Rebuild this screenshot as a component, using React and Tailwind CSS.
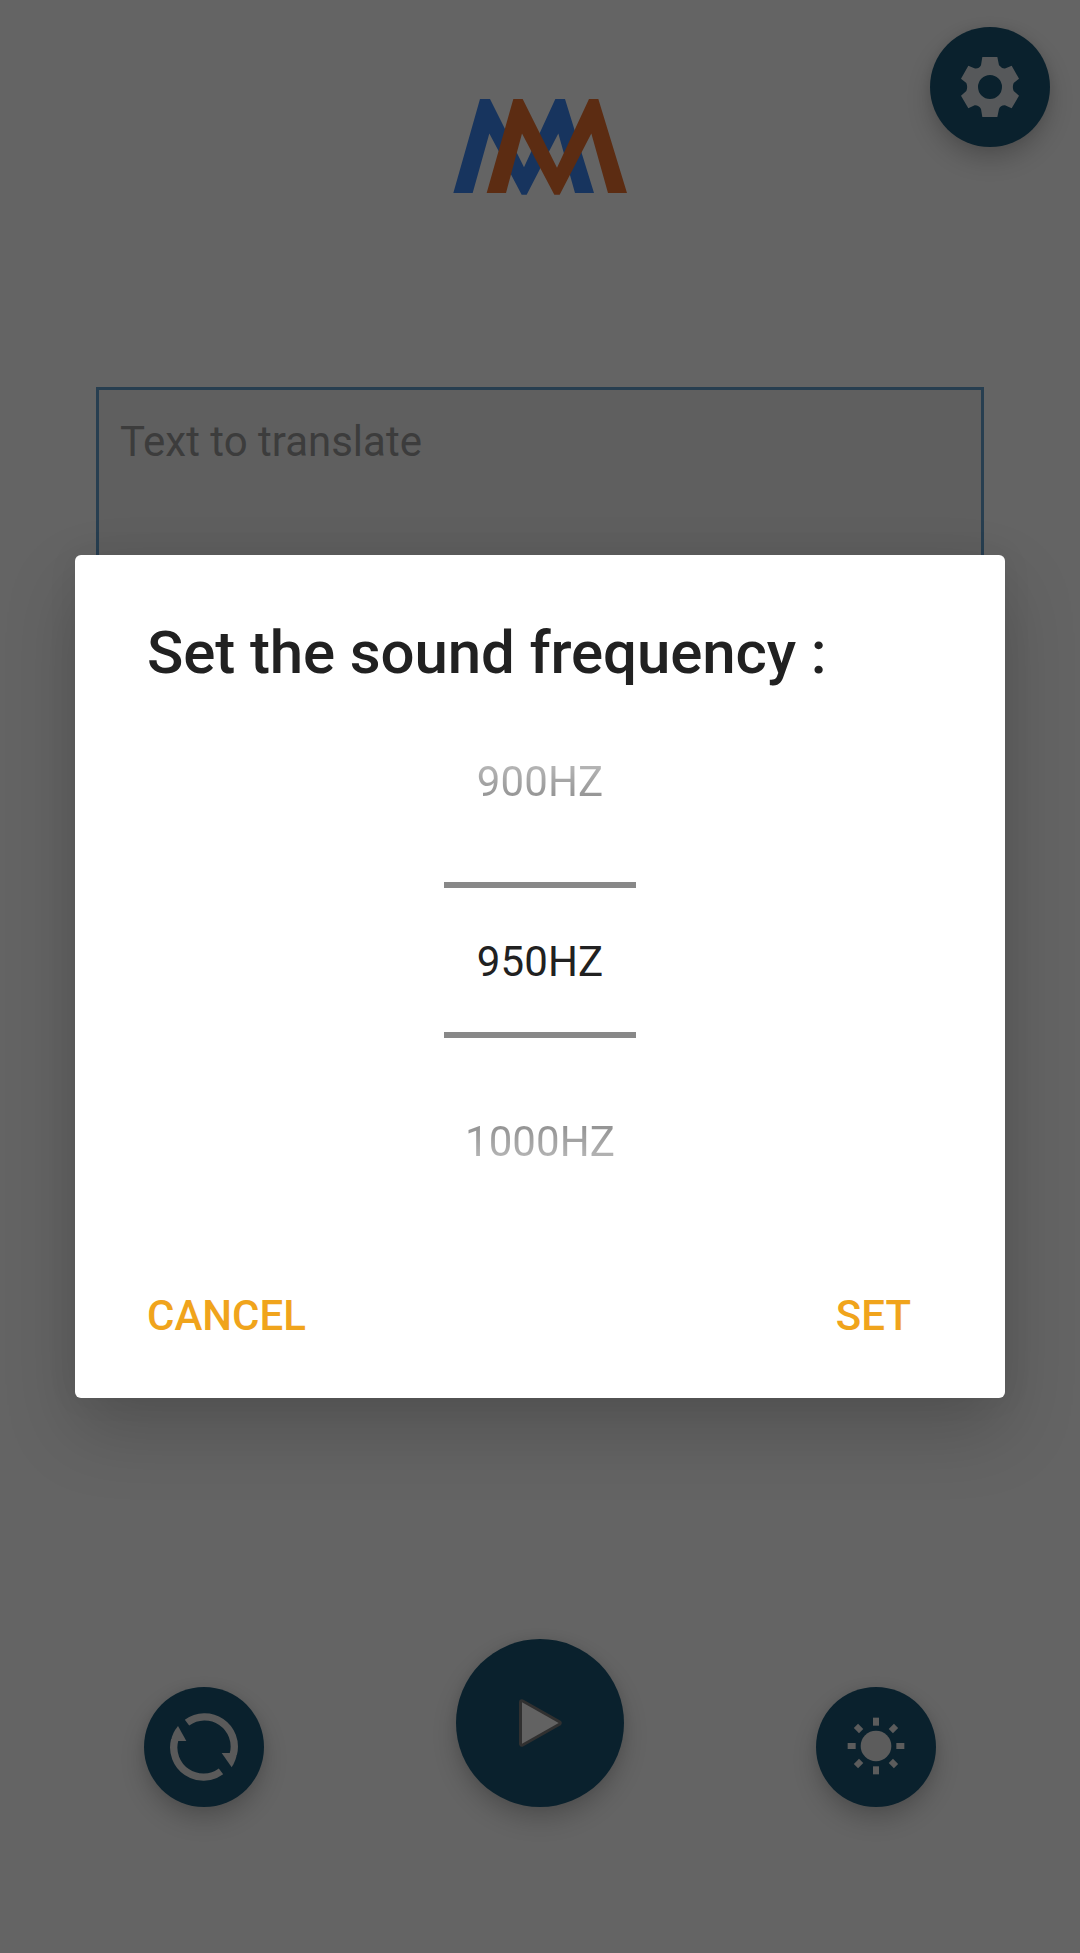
import clsx from "clsx";

const rayAngles = [0, 45, 90, 135, 180, 225, 270, 315];

function Logo() {
  return (
    <svg className="mt-[72px] h-24 w-[174px]" viewBox="69 56 522 290" preserveAspectRatio="none">
      <path
        fill="#3a82ea"
        d="M70 340L150 56H180L282 262L376 56H405L492 340H435L385 160L290 345H275L178 160L128 340Z"
      />
      <path
        fill="#e66e2d"
        d="M170 340L250 56H278L381 264L477 56H505L591 340H534L484 160L389 345H373L276 160L228 340Z"
      />
    </svg>
  );
}

function GearIcon() {
  return (
    <svg className="h-[60px] w-[60px]" viewBox="150 141 180 180" fill="#d7dde0" fillRule="evenodd">
      <path d="M217 141H262L267 166Q277 178 287 175L305 167L327 206L311 219Q306 231 311 243L327 257L305 295L285 286Q272 285 267 297L262 321H217L213 297Q206 285 194 286L175 295L153 257L169 243Q174 231 169 219L153 206L175 167L193 175Q206 178 213 166ZM240 195A36 36 0 1 0 240 267A36 36 0 1 0 240 195Z" />
    </svg>
  );
}

function SyncIcon() {
  return (
    <svg className="h-[68px] w-[68px]" viewBox="120 129 204 204">
      <g fill="none" stroke="#e0e0e0" strokeWidth="22">
        <path d="M171 158A89 89 0 0 1 310 252" />
        <path d="M273 304A89 89 0 0 1 134 210" />
      </g>
      <g fill="#e0e0e0">
        <path d="M275 249H321Q318 272 305 292Z" />
        <path d="M169 213H123Q126 190 144 168Z" />
      </g>
    </svg>
  );
}

function PlayIcon() {
  return (
    <svg className="h-[56px] w-[56px]" viewBox="246 256 168 168">
      <path
        d="M276 278L386 340L276 402Z"
        fill="none"
        stroke="#787878"
        strokeWidth="18"
        strokeLinejoin="round"
      />
      <path d="M276 278L386 340L276 402Z" fill="#f5f5f5" />
    </svg>
  );
}

function SunIcon() {
  return (
    <svg className="h-[60px] w-[60px] -translate-y-px" viewBox="138 137 180 180" fill="#e6e6e6">
      <circle cx="228" cy="227" r="46" />
      {rayAngles.map((angle) => (
        <rect
          key={angle}
          x="219"
          y="142"
          width="18"
          height={angle % 90 ? 22 : 24}
          transform={`rotate(${angle} 228 227)`}
        />
      ))}
    </svg>
  );
}

function RoundButton({ label, large, children }) {
  return (
    <button
      aria-label={label}
      className={clsx(
        "flex items-center justify-center rounded-full bg-[#195371] shadow-[0_12px_24px_rgba(0,0,0,0.2),0_0_12px_rgba(0,0,0,0.08)]",
        large ? "size-[168px]" : "size-[120px]"
      )}
    >
      {children}
    </button>
  );
}

function FrequencyPicker() {
  return (
    <div className="mx-auto mt-[5px] flex w-48 flex-col text-center text-[42px] leading-[48px] tracking-[0.1px]">
      <div className="flex h-[190px] items-center justify-center pb-[10px]">
        <span className="bg-linear-to-b from-[#bdbdbd] to-[#8c8c8c] bg-clip-text text-transparent">900HZ</span>
      </div>
      <div className="h-[6px] bg-[#888888]" />
      <div className="flex h-36 items-center justify-center pt-1 text-[#212121]">950HZ</div>
      <div className="h-[6px] bg-[#888888]" />
      <div className="flex h-[194px] items-center justify-center pt-[14px]">
        <span className="bg-linear-to-b from-[#8c8c8c] to-[#bdbdbd] bg-clip-text text-transparent">1000HZ</span>
      </div>
    </div>
  );
}

function FrequencyDialog() {
  return (
    <div
      role="dialog"
      className="flex h-[843px] w-[930px] flex-col rounded-[6px] bg-white pt-[63px] shadow-[0_32px_72px_rgba(0,0,0,0.18),0_0_32px_rgba(0,0,0,0.06)]"
    >
      <h2 className="pl-[72px] text-[60px] leading-[70px] font-medium tracking-[-0.12px] text-[#212121]">
        Set the sound frequency :
      </h2>
      <div className="-mt-px">
        <FrequencyPicker />
      </div>
      <div className="mt-[30px] flex h-[108px] items-center justify-between pr-[94px] pl-[72px] text-[42px] leading-[48px] font-medium text-[#f0a41c]">
        <button>CANCEL</button>
        <button>SET</button>
      </div>
    </div>
  );
}

export default function App() {
  return (
    <div className="relative h-[1953px] w-[1080px] overflow-hidden bg-[#f9f9f9] font-['Roboto',sans-serif]">
      <div className="flex h-full flex-col">
        <header className="grid h-[169px] grid-cols-3 px-[30px] pt-[27px]">
          <span />
          <div className="flex items-start justify-center">
            <Logo />
          </div>
          <div className="flex items-start justify-end">
            <RoundButton label="Settings">
              <GearIcon />
            </RoundButton>
          </div>
        </header>

        <div className="mx-24 mt-[218px] h-[600px] border-[3px] border-[#639bc9] bg-[#eeeeee] pt-7 pl-[21px] text-[42px] leading-[48px] text-[#979797]">
          Text to translate
        </div>

        <footer className="mt-auto flex items-end justify-between px-36 pb-[146px]">
          <RoundButton label="Reverse">
            <SyncIcon />
          </RoundButton>
          <RoundButton label="Play" large>
            <PlayIcon />
          </RoundButton>
          <RoundButton label="Light">
            <SunIcon />
          </RoundButton>
        </footer>
      </div>

      <div className="absolute inset-0 flex items-center justify-center bg-black/60">
        <FrequencyDialog />
      </div>
    </div>
  );
}
